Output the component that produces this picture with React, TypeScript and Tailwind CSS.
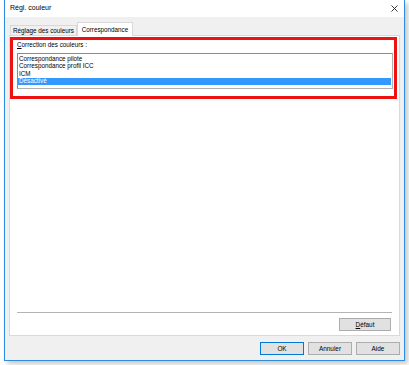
import React from "react";

const items = ["Correspondance pilote", "Correspondance profil ICC", "ICM", "Désactivé"];

function Btn({ children, primary, w = "w-[44px]" }: { children: React.ReactNode; primary?: boolean; w?: string }) {
  return (
    <div
      className={`${w} h-[13px] flex items-center justify-center bg-[#e1e1e1] text-[6.4px] text-black border ${
        primary ? "border-[#0078d7]" : "border-[#adadad]"
      }`}
    >
      {children}
    </div>
  );
}

export default function App() {
  return (
    <div className="w-[409px] h-[365px] bg-white pl-[4px] overflow-hidden" style={{ fontFamily: '"Liberation Sans", Arial, sans-serif' }}>
      <div className="w-[401px] h-[361px] flex flex-col bg-[#f0f0f0] border-x border-b border-[#2b8ce0] shadow-[3px_3px_5px_rgba(0,0,0,0.22)]">
        {/* title bar */}
        <div className="h-[17px] bg-white flex items-center justify-between pl-[5px] pr-[6px]">
          <span className="text-[7px] text-black">Régl. couleur</span>
          <svg width="7" height="7" viewBox="0 0 7 7" className="text-[#222]">
            <path d="M0.5 0.5L6.5 6.5M6.5 0.5L0.5 6.5" stroke="currentColor" strokeWidth="0.9" />
          </svg>
        </div>

        {/* tabs */}
        <div className="h-[18px] flex items-end pl-[5px] relative z-10">
          <div className="w-[67px] h-[10px] border border-b-0 border-[#d9d9d9] bg-[#f0f0f0] flex items-center justify-center text-[6.3px] text-black">
            Réglage des couleurs
          </div>
          <div className="w-[56px] h-[14px] -mb-px border border-b-0 border-[#d9d9d9] bg-white flex items-start pt-[2px] justify-center text-[6.3px] text-black">
            Correspondance
          </div>
        </div>

        {/* panel */}
        <div className="mx-[4px] h-[301px] bg-white border border-[#d9d9d9] flex flex-col">
          <div className="mt-[1px] w-[387px] h-[62px] border-[3px] border-[#ee1111] pl-[4px] pt-[1px]">
            <div className="h-[8px] flex items-center text-[6.3px] text-black leading-none">
              <span><u>C</u>orrection des couleurs :</span>
            </div>
            <div className="mt-[4px] w-[376px] h-[36px] border border-[#8c8c8c] border-r-[#b0b0b0] border-b-[#b0b0b0] bg-white pt-[1px]">
              {items.map((it, i) => (
                <div
                  key={it}
                  className={`h-[7.5px] flex items-center pl-[1px] text-[6.3px] leading-none ${
                    i === 3 ? "bg-[#3399ff] text-white mr-[1px]" : "text-black"
                  }`}
                >
                  {it}
                </div>
              ))}
            </div>
          </div>
          <div className="flex-1" />
          <div className="ml-[7px] w-[375px] h-px bg-[#b4b4b4]" />
          <div className="flex justify-end pr-[8px] mt-[5px] mb-[4px]">
            <Btn w="w-[52px]"><span><u>D</u>éfaut</span></Btn>
          </div>
        </div>

        {/* bottom buttons */}
        <div className="flex justify-end gap-[4px] pr-[4px] mt-[6px]">
          <Btn primary>OK</Btn>
          <Btn>Annuler</Btn>
          <Btn>Aide</Btn>
        </div>
      </div>
    </div>
  );
}
